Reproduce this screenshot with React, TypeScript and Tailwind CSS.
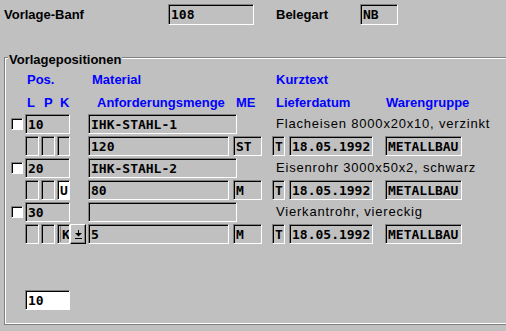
import type { ReactNode } from "react";

type FieldProps = {
  className: string;
  children?: ReactNode;
  white?: boolean;
};

// sunken entry field, win-3.x style
function Field({ className, children, white }: FieldProps) {
  return (
    <div
      className={`flex shrink-0 items-center overflow-hidden whitespace-pre border border-t-[#808080] border-l-[#808080] border-r-white border-b-white pl-[2px] font-['DejaVu_Sans_Mono','Liberation_Mono',monospace] text-[13px] leading-none font-bold text-black shadow-[inset_1px_1px_0_#000] ${
        white ? "bg-white" : "bg-[#c0c0c0]"
      } ${className}`}
    >
      {children}
    </div>
  );
}

function Checkbox() {
  return (
    <div className="ml-[5px] h-[12px] w-[12px] shrink-0 border border-t-[#808080] border-l-[#808080] border-r-white border-b-white bg-white shadow-[inset_1px_1px_0_#000]" />
  );
}

function DropButton() {
  return (
    <div className="flex h-[20px] w-[16px] shrink-0 items-center justify-center border border-t-white border-l-white border-r-black border-b-black bg-[#c0c0c0] shadow-[inset_-1px_-1px_0_#808080]">
      <svg width="7" height="9" viewBox="0 0 7 9">
        <rect x="3" y="0" width="1" height="3" fill="#000" />
        <polygon points="0,3 7,3 3.5,6.5" fill="#000" />
        <rect x="0" y="8" width="7" height="1" fill="#000" />
      </svg>
    </div>
  );
}

const rows = [
  {
    pos: "10",
    material: "IHK-STAHL-1",
    kurztext: "Flacheisen 8000x20x10, verzinkt",
    menge: "120",
    me: "ST",
    k: "none",
  },
  {
    pos: "20",
    material: "IHK-STAHL-2",
    kurztext: "Eisenrohr 3000x50x2, schwarz",
    menge: "80",
    me: "M",
    k: "U",
  },
  {
    pos: "30",
    material: "",
    kurztext: "Vierkantrohr, viereckig",
    menge: "5",
    me: "M",
    k: "K",
  },
];

export default function App() {
  return (
    <div className="flex h-[331px] w-[506px] flex-col overflow-hidden bg-[#c0c0c0] font-['Liberation_Sans',Arial,sans-serif] text-[13px] text-black">
      {/* ── Kopf ── */}
      <div className="mt-[4px] flex h-[21px] items-center pl-[4px] leading-[16px] font-bold">
        <span className="w-[164px]">Vorlage-Banf</span>
        <Field className="h-[21px] w-[86px]">108</Field>
        <span className="ml-[22px] w-[84px]">Belegart</span>
        <Field className="h-[21px] w-[38px]">NB</Field>
      </div>

      {/* ── Gruppe Vorlagepositionen ── */}
      <div className="relative mt-[32px] ml-[4px] w-[520px] border-t border-l border-b border-[#808080]">
        <span className="absolute -top-[6px] left-[3px] bg-[#c0c0c0] px-[1px] leading-[16px] font-bold">
          Vorlagepositionen
        </span>

        <div className="flex h-[266px] flex-col border-t border-l border-b border-white">
          {/* headers */}
          <div className="mt-[13px] flex pl-[21px] leading-[16px] font-bold text-[#0000ff]">
            <span className="w-[65px]">Pos.</span>
            <span className="w-[184px]">Material</span>
            <span>Kurztext</span>
          </div>
          <div className="mt-[7px] flex pl-[21px] leading-[16px] font-bold text-[#0000ff]">
            <span className="w-[17px]">L</span>
            <span className="w-[16px]">P</span>
            <span className="w-[37px]">K</span>
            <span className="w-[139px]">Anforderungsmenge</span>
            <span className="w-[40px]">ME</span>
            <span className="w-[110px]">Lieferdatum</span>
            <span>Warengruppe</span>
          </div>

          {/* positions */}
          <div className="mt-[3px] flex flex-col gap-[2px]">
            {rows.map((row) => (
              <div key={row.pos} className="flex flex-col gap-[2px]">
                <div className="flex h-[20px] items-center">
                  <Checkbox />
                  <Field className="ml-[2px] h-[20px] w-[45px]">{row.pos}</Field>
                  <Field className="ml-[18px] h-[20px] w-[149px]">{row.material}</Field>
                  <span className="ml-[39px] leading-[16px] tracking-[0.8px] whitespace-nowrap">
                    {row.kurztext}
                  </span>
                </div>

                <div className="flex h-[20px] items-center">
                  <Field className="ml-[19px] h-[20px] w-[14px]" />
                  <Field className="ml-[2px] h-[20px] w-[14px]" />
                  {row.k === "U" && (
                    <Field white className="ml-[2px] h-[20px] w-[13px]">
                      U
                    </Field>
                  )}
                  {row.k === "K" && (
                    <Field className="ml-[2px] h-[20px] w-[13px] pl-[1px]">
                      <span className="mr-[1px] h-[16px] w-[1px] shrink-0 bg-[#808080]" />K
                    </Field>
                  )}
                  {row.k === "none" && <Field className="ml-[2px] h-[20px] w-[13px]" />}
                  {row.k === "K" ? (
                    <>
                      <DropButton />
                      <Field className="ml-[2px] h-[20px] w-[141px]">{row.menge}</Field>
                    </>
                  ) : (
                    <Field className="ml-[18px] h-[20px] w-[141px]">{row.menge}</Field>
                  )}
                  <Field className="ml-[4px] h-[20px] w-[29px]">{row.me}</Field>
                  <Field className="ml-[10px] h-[20px] w-[13px]">T</Field>
                  <Field className="ml-[4px] h-[20px] w-[84px]">18.05.1992</Field>
                  <Field className="ml-[12px] h-[20px] w-[77px]">METALLBAU</Field>
                </div>
              </div>
            ))}
          </div>

          {/* Einstiegsposition */}
          <Field white className="mt-[46px] ml-[19px] h-[20px] w-[45px]">
            10
          </Field>
        </div>
      </div>
    </div>
  );
}
